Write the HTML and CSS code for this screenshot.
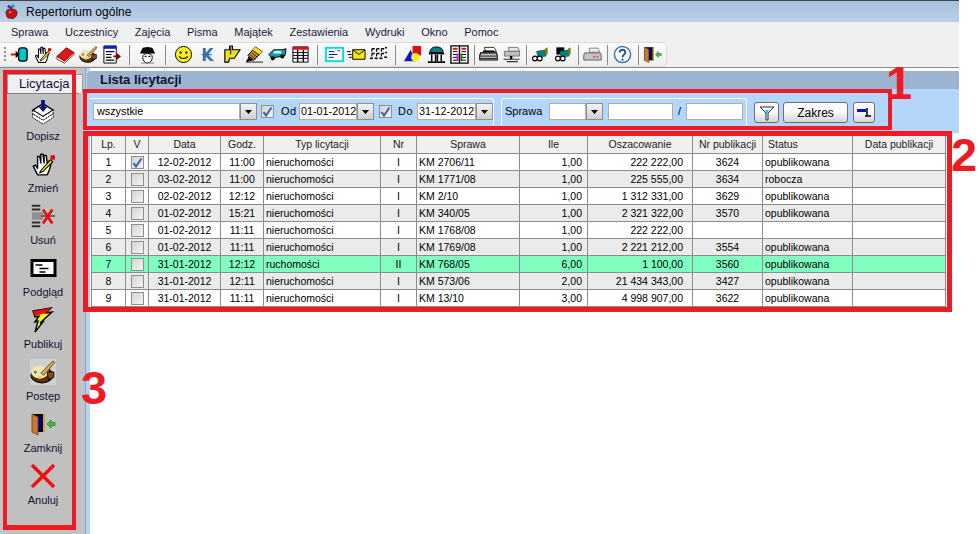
FILE: index.html
```html
<!DOCTYPE html>
<html lang="pl">
<head>
<meta charset="utf-8">
<title>Repertorium ogólne</title>
<link rel="stylesheet" href="styles.css">
</head>
<body>
<svg class="defs" width="0" height="0">
  <symbol id="hand" viewBox="0 0 24 24">
    <path d="M7 22 3 14l2-1 2 3V5l2 0 1 6V3h2l1 8V4h2l1 8 2-3 2 1-2 7-2 5z" fill="#fff" stroke="#000" stroke-width="1.300" stroke-linejoin="round"/>
    <path d="M10 18 19 8l2 2-9 9-3 1z" fill="#f0e020" stroke="#000"/>
    <rect x="19" y="4" width="4" height="4" fill="#e00000"/>
  </symbol>
  <symbol id="palette" viewBox="0 0 24 24">
    <ellipse cx="11" cy="15" rx="10" ry="7" fill="#5a3210" stroke="#000"/>
    <ellipse cx="9" cy="12" rx="8" ry="6" fill="#f0e4b0"/>
    <circle cx="5" cy="12" r="1.500" fill="#808080"/>
    <circle cx="9" cy="17" r="1.500" fill="#e8d040"/>
    <path d="M10 13 21 2l2 1L13 15z" fill="#d0a860" stroke="#604010" stroke-width=".8"/>
    <path d="M16 12h6v5l-5 2z" fill="#8a4a20" stroke="#000" stroke-width=".8"/>
  </symbol>
  <symbol id="door" viewBox="0 0 26 24">
    <path d="M2 2h13v18H2z" fill="#000"/>
    <path d="M5 4h8v14H5z" fill="#000080"/>
    <path d="M2 2 8 5v18l-6-3z" fill="#c87830" stroke="#704010" stroke-width=".8"/>
    <path d="M13 2h2v18h-2z" fill="#d0b000"/>
    <path d="M17 12l4-4v2.500h4v3h-4V16z" fill="#40c040" stroke="#207020" stroke-width=".7"/>
  </symbol>
  <symbol id="printer" viewBox="0 0 24 20">
    <path d="M7 1h12l3 5H8z" fill="#fff" stroke="#000"/>
    <path d="M2 8h20l1 3v6H1v-6z" fill="#c0c0c0" stroke="#000" stroke-width="1.400"/>
    <path d="M2 12h20M2 15h20" stroke="#000"/>
    <path d="M5 6h14" stroke="#000" stroke-width="2"/>
  </symbol>
  <symbol id="greyprinter" viewBox="0 0 24 20">
    <path d="M8 2h11l2 5H8z" fill="#f0f0f0" stroke="#707070"/>
    <path d="M2 8h20l1 3v6H1v-6z" fill="#c4c4c4" stroke="#606060" stroke-width="1.200"/>
    <path d="M13 13h2M17 13h2" stroke="#e02020" stroke-width="1.500"/>
  </symbol>
  <symbol id="cart" viewBox="0 0 24 20">
    <path d="M7 6 19 4v8l-10 2z" fill="#008080" stroke="#004040" stroke-width=".6"/>
    <path d="M18 2l3-1v9h-3z" fill="#808000"/>
    <circle cx="5" cy="15" r="3" fill="#fff" stroke="#000" stroke-width="1.400"/>
    <circle cx="11" cy="15" r="3" fill="#fff" stroke="#000" stroke-width="1.400"/>
  </symbol>
  <symbol id="tick" viewBox="0 0 11 11">
    <path d="M1.500 6 4 9.500 9.500 1.500" fill="none" stroke="#3c5fa8" stroke-width="2"/>
  </symbol>
  <symbol id="arrow" viewBox="0 0 9 5">
    <path d="M0 0h9L4.500 5z" fill="#000"/>
  </symbol>
</svg>

<div class="app">
  <header class="titlebar">
    <svg class="appicon" viewBox="0 0 16 16"><path d="M3 9c0-3 3-4 5-3 2-1 6 0 6 3 0 4-3 6-5 6-1 0-1-.5-2-.5S5 15 4.500 14 3 11 3 9z" fill="#c81010" stroke="#400000" stroke-width=".7"/><circle cx="6" cy="3" r="1.600" fill="#2040d0"/><circle cx="10" cy="2.500" r="1.600" fill="#20a040"/><circle cx="8" cy="4.500" r="1.400" fill="#800080"/><path d="M6 9.500 8 8" stroke="#fff"/></svg>
    <span class="apptitle">Repertorium ogólne</span>
  </header>

  <nav class="menubar">
    <span class="menuitem">Sprawa</span>
    <span class="menuitem">Uczestnicy</span>
    <span class="menuitem">Zajęcia</span>
    <span class="menuitem">Pisma</span>
    <span class="menuitem">Majątek</span>
    <span class="menuitem">Zestawienia</span>
    <span class="menuitem">Wydruki</span>
    <span class="menuitem">Okno</span>
    <span class="menuitem">Pomoc</span>
  </nav>

  <div class="toolstrip">
    <div class="toolbar">
      <span class="grip"></span>
      <span class="tool"><svg class="ti" viewBox="0 0 20 20"><rect x="9" y="3" width="9" height="14" rx="3" fill="#00c8c8" stroke="#000" stroke-width="1.400"/><path d="M1 10h8" stroke="#e00000" stroke-width="2"/><path d="M6 6l4 4-4 4z" fill="#000"/></svg></span>
      <span class="tool"><svg class="ti"><use href="#hand"/></svg></span>
      <span class="tool"><svg class="ti" viewBox="0 0 20 20"><path d="M1 12 11 3l8 5-10 9z" fill="#e01818" stroke="#800000"/><path d="M1 12v3l8 4 10-9V8L9 17z" fill="#fff" stroke="#600000" stroke-width=".8"/></svg></span>
      <span class="tool"><svg class="ti"><use href="#palette"/></svg></span>
      <span class="tool"><svg class="ti" viewBox="0 0 20 20"><path d="M2 1h13v18H2z" fill="#fff" stroke="#000"/><path d="M2 1h13v3H2z" fill="#1020d0"/><path d="M4 7h9M4 10h6M4 13h6M4 16h9" stroke="#000" stroke-width="1.300"/><path d="M12 11h3V8l5 4-5 4v-3h-3z" fill="#800000"/></svg></span>
      <span class="sep"></span>
      <span class="tool"><svg class="ti" viewBox="0 0 20 20"><path d="M5 13c0-3 2-4 5-4s5 1 5 4-2 6-5 6-5-3-5-6z" fill="#fff" stroke="#000"/><path d="M2 9 5 3l5-1 5 1 3 6z" fill="#000"/><path d="M7 12h2M11 12h2" stroke="#000" stroke-width="1.500"/><path d="M3 19h14" stroke="#808080"/></svg></span>
      <span class="sep"></span>
      <span class="tool"><svg class="ti" viewBox="0 0 20 20"><circle cx="10" cy="10" r="8.500" fill="#f8f020" stroke="#000"/><circle cx="7" cy="8" r="1.200"/><circle cx="13" cy="8" r="1.200"/><path d="M5.500 12c2 3 7 3 9 0" fill="none" stroke="#000" stroke-width="1.200"/></svg></span>
      <span class="tool tool-wide"><span class="kip">₭</span></span>
      <span class="tool"><svg class="ti" viewBox="0 0 20 20"><path d="M3 5h5V1h3v4h8l-6 9H8l-1 4H3z" fill="#f0e020" stroke="#000" stroke-width="1.200"/><path d="M9 2v8" stroke="#404040" stroke-width="1.500"/></svg></span>
      <span class="tool"><svg class="ti" viewBox="0 0 20 20"><path d="M3 11 11 2l7 5-9 9z" fill="#c89030" stroke="#000"/><path d="M11 2l7 5-3 3-7-5z" fill="#f0e020"/><path d="M5 10l6 5M7 8l6 5M9 6l6 5" stroke="#000" stroke-width=".8"/><path d="M1 18h18" stroke="#808080" stroke-width="2"/><path d="M1 18l3-6 5 4z" fill="#000"/></svg></span>
      <span class="tool"><svg class="ti" viewBox="0 0 20 20"><path d="M1 10 6 5h9l4-1-1 7-14 3z" fill="#10a0a0" stroke="#000"/><path d="M7 6h7v3H5z" fill="#c0ffff"/><circle cx="5" cy="14" r="2.200" fill="#000"/><circle cx="15" cy="12" r="2.200" fill="#000"/></svg></span>
      <span class="tool"><svg class="ti" viewBox="0 0 20 20"><path d="M2 2h16v16H2z" fill="#fff" stroke="#000"/><path d="M2 2h16v3H2z" fill="#e01010"/><path d="M7 5v13M13 5v13" stroke="#000" stroke-width="1.500"/><path d="M2 8h16M2 11h16M2 14h16" stroke="#000"/></svg></span>
      <span class="sep sep-mid"></span>
      <span class="tool tool-n"><svg class="ti" viewBox="0 0 20 20"><rect x="1" y="3" width="18" height="14" fill="#fff" stroke="#00e0e0" stroke-width="2"/><path d="M4 7h6M4 10h9M4 13h5" stroke="#0000c0"/><path d="M13 6h3" stroke="#e00000"/></svg></span>
      <span class="tool tool-n"><svg class="ti" viewBox="0 0 20 20"><path d="M6 5h13v10H6z" fill="#f8e800" stroke="#000"/><path d="M6 5l6.500 5L19 5" fill="none" stroke="#000"/><path d="M0 7h4M1 10h4M2 13h3" stroke="#000"/></svg></span>
      <span class="tool tool-n"><svg class="ti" viewBox="0 0 20 20"><path d="M3 4h3M8 4h3M13 4h3M17 3h2M3 9h3M8 9h3M13 9h3M17 8h2M1 14h3M6 14h3M11 14h3M16 13h3" stroke="#000" stroke-width="1.600"/><path d="M3 4v11M8 4v11M13 4v11" stroke="#000" stroke-width="1.200" stroke-dasharray="3 2"/></svg></span>
      <span class="sep"></span>
      <span class="tool"><svg class="ti" viewBox="0 0 20 20"><path d="M9 1h9v10H9z" fill="#e01010"/><path d="M0 17 7 5l5 12z" fill="#1010e0"/><circle cx="12" cy="13" r="4.500" fill="#f8f020"/></svg></span>
      <span class="tool"><svg class="ti" viewBox="0 0 20 20"><path d="M3 8c0-4 3-6 7-6s7 2 7 6z" fill="#008080" stroke="#000"/><path d="M2 8h16v2H2zM1 17h18v2H1z" fill="#000"/><path d="M4 10h12v7H4z" fill="#fff"/><path d="M5 10v7M9 10v7M11 10v7M15 10v7" stroke="#000" stroke-width="1.600"/></svg></span>
      <span class="tool"><svg class="ti" viewBox="0 0 20 20"><path d="M1 1h18v18H1z" fill="#fff" stroke="#000" stroke-width="1.400"/><path d="M10 1v18" stroke="#000" stroke-width="1.500"/><path d="M3 4h5M12 4h5" stroke="#e01010" stroke-width="2"/><path d="M3 7h5M12 7h5M3 10h5M12 10h5M3 13h5M12 13h5M3 16h5M12 16h5" stroke="#000"/><path d="M8 9v8" stroke="#e000e0" stroke-width="2"/><path d="M12 9v8" stroke="#008000" stroke-width="2"/></svg></span>
      <span class="sep sep-narrow"></span>
      <span class="tool"><svg class="ti"><use href="#printer"/></svg></span>
      <span class="tool"><svg class="ti" viewBox="0 0 24 20"><path d="M8 1h12l2 5H9z" fill="#e8e8e8" stroke="#606060"/><path d="M3 6h19v6H3z" fill="#c0c0c0" stroke="#606060"/><path d="M10 12h3v4h-3z" fill="#000"/><path d="M2 16h20M6 19h14" stroke="#303030" stroke-width="1.400"/></svg></span>
      <span class="sep sep-narrow"></span>
      <span class="tool"><svg class="ti"><use href="#cart"/></svg></span>
      <span class="tool"><svg class="ti" viewBox="0 0 24 20"><path d="M3 1h10v9H3z" fill="#000"/><use href="#cart" width="24" height="20"/></svg></span>
      <span class="sep sep-narrow"></span>
      <span class="tool"><svg class="ti"><use href="#greyprinter"/></svg></span>
      <span class="sep sep-narrow"></span>
      <span class="tool tool-pad"><svg class="ti" viewBox="0 0 20 20"><circle cx="10" cy="10" r="8.500" fill="#fff" stroke="#3a78b8" stroke-width="1.600"/><path d="M7 8c0-4 6-4 6 0 0 2-3 2-3 5" fill="none" stroke="#1c5aa0" stroke-width="2"/><circle cx="10" cy="15.500" r="1.200" fill="#1c5aa0"/></svg></span>
      <span class="sep sep-narrow"></span>
      <span class="tool"><svg class="ti"><use href="#door"/></svg></span>
    </div>
  </div>

  <div class="workspace">
    <aside class="sidebar">
      <div class="tab">Licytacja</div>
      <div class="tabpanel">
        <div class="sidebtn">
          <div class="sideicon"><svg class="si" viewBox="0 0 28 28"><path d="M3 12 14 5l11 7-11 7z" fill="#fff" stroke="#000" stroke-width="1.400"/><path d="M3 12v4l11 7 11-7v-4l-11 7z" fill="#fff" stroke="#000" stroke-dasharray="2 1"/><path d="M3 16v4l11 7 11-7v-4l-11 7z" fill="#fff" stroke="#000" stroke-dasharray="2 1"/><path d="M12 1h4v7h3l-5 6-5-6h3z" fill="#101080"/></svg></div>
          <span class="sidelabel">Dopisz</span>
        </div>
        <div class="sidebtn">
          <div class="sideicon"><svg class="si"><use href="#hand"/></svg></div>
          <span class="sidelabel">Zmień</span>
        </div>
        <div class="sidebtn">
          <div class="sideicon"><svg class="si" viewBox="0 0 28 28"><path d="M2 2h9v2H2zM2 6h9v2H2z" fill="#303030"/><path d="M2 10h12v8H2z" fill="#909090"/><path d="M2 20h9v2H2zM2 24h9v2H2z" fill="#303030"/><path d="M12 14h15" stroke="#606060" stroke-width="2"/><path d="M14 7l10 15M24 7 14 22" stroke="#e81010" stroke-width="3"/></svg></div>
          <span class="sidelabel">Usuń</span>
        </div>
        <div class="sidebtn">
          <div class="sideicon"><svg class="si si-card" viewBox="0 0 26 20"><path d="M1.500 2.500h23v15h-23z" fill="#fff" stroke="#000" stroke-width="3"/><path d="M5 7h7M9 10.500h9M9 14h6" stroke="#000" stroke-width="1.600"/></svg></div>
          <span class="sidelabel">Podgląd</span>
        </div>
        <div class="sidebtn">
          <div class="sideicon"><svg class="si" viewBox="0 0 24 26"><path d="M2 4 20 1l-5 5 6-1L9 16l3-1-8 10 3-11-3 1 4-6-4 1z" fill="#f8f020" stroke="#000" stroke-width="1.400"/><path d="M2 4 20 1l-5 5-8 2-3 1z" fill="#e81010"/></svg></div>
          <span class="sidelabel">Publikuj</span>
        </div>
        <div class="sidebtn">
          <div class="sideicon"><svg class="si si-tile"><use href="#palette"/></svg></div>
          <span class="sidelabel">Postęp</span>
        </div>
        <div class="sidebtn">
          <div class="sideicon"><svg class="si"><use href="#door"/></svg></div>
          <span class="sidelabel">Zamknij</span>
        </div>
        <div class="sidebtn">
          <div class="sideicon"><svg class="si" viewBox="0 0 26 24"><path d="M2 1 24 23M24 1 2 23" stroke="#f01010" stroke-width="3.500"/></svg></div>
          <span class="sidelabel">Anuluj</span>
        </div>
      </div>
    </aside>

    <main class="main">
      <h1 class="heading">Lista licytacji</h1>
      <section class="filter">
        <div class="group group-dates">
          <span class="field w-combo">wszystkie</span><span class="drop"><svg class="dropmark"><use href="#arrow"/></svg></span>
          <span class="check check-a"><svg class="tick"><use href="#tick"/></svg></span>
          <span class="lbl lbl-od">Od</span>
          <span class="field w-date">01-01-2012</span><span class="drop"><svg class="dropmark"><use href="#arrow"/></svg></span>
          <span class="check check-b"><svg class="tick"><use href="#tick"/></svg></span>
          <span class="lbl lbl-do">Do</span>
          <span class="field w-date2">31-12-2012</span><span class="drop"><svg class="dropmark"><use href="#arrow"/></svg></span>
        </div>
        <div class="group group-case">
          <span class="lbl lbl-sprawa">Sprawa</span>
          <span class="field w-rep"></span><span class="drop"><svg class="dropmark"><use href="#arrow"/></svg></span>
          <span class="field w-num"></span>
          <span class="lbl lbl-slash">/</span>
          <span class="field w-year"></span>
        </div>
        <button class="btn btn-filter"><svg class="funnel" viewBox="0 0 16 16"><path d="M1 2h14L9 8v7H7V8z" fill="#fff" stroke="#303030"/><path d="M6 5h4L8.500 8v6h-1V8z" fill="#20c0e0"/></svg></button>
        <button class="btn btn-range">Zakres</button>
        <button class="btn btn-export"><svg class="funnel" viewBox="0 0 16 16"><path d="M1 4h9v3H1z" fill="#1010d0"/><path d="M11 3v8M9 11h6" stroke="#000" stroke-width="1.500"/></svg></button>
      </section>

      <table class="grid">
        <colgroup>
          <col class="c-lp"><col class="c-v"><col class="c-data"><col class="c-godz"><col class="c-typ"><col class="c-nr"><col class="c-spr"><col class="c-ile"><col class="c-osz"><col class="c-pub"><col class="c-sta"><col class="c-dat">
        </colgroup>
        <thead>
          <tr><th>Lp.</th><th>V</th><th>Data</th><th>Godz.</th><th>Typ licytacji</th><th>Nr</th><th>Sprawa</th><th>Ile</th><th>Oszacowanie</th><th>Nr publikacji</th><th class="th-status">Status</th><th>Data publikacji</th></tr>
        </thead>
        <tbody>
          <tr><td class="ctr">1</td><td class="ctr"><span class="check"><svg class="tick"><use href="#tick"/></svg></span></td><td class="ctr">12-02-2012</td><td class="ctr">11:00</td><td>nieruchomości</td><td class="ctr">I</td><td>KM 2706/11</td><td class="num">1,00</td><td class="num amt">222 222,00</td><td class="ctr">3624</td><td>opublikowana</td><td></td></tr>
          <tr class="alt"><td class="ctr">2</td><td class="ctr"><span class="check"></span></td><td class="ctr">03-02-2012</td><td class="ctr">11:00</td><td>nieruchomości</td><td class="ctr">I</td><td>KM 1771/08</td><td class="num">1,00</td><td class="num amt">225 555,00</td><td class="ctr">3634</td><td>robocza</td><td></td></tr>
          <tr><td class="ctr">3</td><td class="ctr"><span class="check"></span></td><td class="ctr">02-02-2012</td><td class="ctr">12:12</td><td>nieruchomości</td><td class="ctr">I</td><td>KM 2/10</td><td class="num">1,00</td><td class="num amt">1 312 331,00</td><td class="ctr">3629</td><td>opublikowana</td><td></td></tr>
          <tr class="alt"><td class="ctr">4</td><td class="ctr"><span class="check"></span></td><td class="ctr">01-02-2012</td><td class="ctr">15:21</td><td>nieruchomości</td><td class="ctr">I</td><td>KM 340/05</td><td class="num">1,00</td><td class="num amt">2 321 322,00</td><td class="ctr">3570</td><td>opublikowana</td><td></td></tr>
          <tr><td class="ctr">5</td><td class="ctr"><span class="check"></span></td><td class="ctr">01-02-2012</td><td class="ctr">11:11</td><td>nieruchomości</td><td class="ctr">I</td><td>KM 1768/08</td><td class="num">1,00</td><td class="num amt">222 222,00</td><td class="ctr"></td><td></td><td></td></tr>
          <tr class="alt"><td class="ctr">6</td><td class="ctr"><span class="check"></span></td><td class="ctr">01-02-2012</td><td class="ctr">11:11</td><td>nieruchomości</td><td class="ctr">I</td><td>KM 1769/08</td><td class="num">1,00</td><td class="num amt">2 221 212,00</td><td class="ctr">3554</td><td>opublikowana</td><td></td></tr>
          <tr class="sel"><td class="ctr">7</td><td class="ctr"><span class="check"></span></td><td class="ctr">31-01-2012</td><td class="ctr">12:12</td><td>ruchomości</td><td class="ctr">II</td><td>KM 768/05</td><td class="num">6,00</td><td class="num amt">1 100,00</td><td class="ctr">3560</td><td>opublikowana</td><td></td></tr>
          <tr class="alt"><td class="ctr">8</td><td class="ctr"><span class="check"></span></td><td class="ctr">31-01-2012</td><td class="ctr">12:11</td><td>nieruchomości</td><td class="ctr">I</td><td>KM 573/06</td><td class="num">2,00</td><td class="num amt">21 434 343,00</td><td class="ctr">3427</td><td>opublikowana</td><td></td></tr>
          <tr><td class="ctr">9</td><td class="ctr"><span class="check"></span></td><td class="ctr">31-01-2012</td><td class="ctr">11:11</td><td>nieruchomości</td><td class="ctr">I</td><td>KM 13/10</td><td class="num">3,00</td><td class="num amt">4 998 907,00</td><td class="ctr">3622</td><td>opublikowana</td><td></td></tr>
        </tbody>
      </table>
    </main>
  </div>

  <div class="mark mark-1"></div>
  <div class="mark mark-2"></div>
  <div class="mark mark-3"></div>
  <span class="marknum marknum-1">1</span>
  <span class="marknum marknum-2">2</span>
  <span class="marknum marknum-3">3</span>
</div>
</body>
</html>
```

FILE: styles.css
```css
* { box-sizing: border-box; }
html, body { margin: 0; padding: 0; background: #fff; overflow: hidden; }
body { width: 979px; height: 534px; font-family: "Liberation Sans", Arial, sans-serif; font-size: 10.500px; color: #000; }
.defs { position: absolute; }

.app { position: relative; width: 959px; height: 534px; display: flex; flex-direction: column; }

/* title + menu */
.titlebar { height: 22px; flex: none; display: flex; align-items: center; padding-left: 3px; border-top: 1px solid #444; background: linear-gradient(#a6bfdc, #bcd1e8); }
.appicon { width: 16px; height: 17px; }
.apptitle { margin-left: 7px; font-size: 12px; color: #000; }

.menubar { height: 20px; flex: none; display: flex; align-items: center; background: #f0f0f0; font-size: 11px; padding-left: 11px; color: #1a1a40; }
.menuitem { margin-right: 16.700px; }

/* toolbar */
.toolstrip { height: 26px; flex: none; background: #f0f0f0; border-bottom: 1px solid #8a8a8a; }
.toolbar { width: 667px; height: 25px; display: flex; align-items: center; padding-left: 4px; background: linear-gradient(#fbfbfb, #eeeeee); border: 1px solid #dcdcdc; border-left: 0; border-radius: 0 5px 5px 0; }
.grip { width: 2px; height: 16px; margin-right: 2px; background: repeating-linear-gradient(#909090 0 2px, transparent 2px 4px); }
.tool { width: 23px; height: 22px; flex: none; display: flex; align-items: center; justify-content: center; }
.tool-wide { width: 25px; }
.tool-pad { width: 25px; }
.tool-n { width: 22px; }
.ti { width: 19px; height: 19px; }
.kip { font-family: "DejaVu Sans", sans-serif; font-size: 18px; font-weight: bold; color: #3a6ea8; line-height: 1; }
.sep { width: 1px; height: 20px; flex: none; margin: 0 6px; background: #8a8a8a; }
.sep-mid { margin: 0 5px; }
.sep-narrow { margin: 0 2.500px; }

/* body */
.workspace { flex: 1; display: flex; min-height: 0; background: #c0c0c0; }
.sidebar { width: 85px; flex: none; padding: 6px 0 0 7px; background: #c0c4c8; display: flex; flex-direction: column; }
.tab { width: 76px; height: 19px; flex: none; background: #f0f0f0; border: 1px solid #9a9a9a; border-bottom: 0; font-size: 13px; line-height: 18px; padding-left: 11px; color: #101040; }
.tabpanel { flex: 1; background: #c0c0c0; padding-top: 1px; border-top: 1px solid #808080; display: flex; flex-direction: column; width: 72px; }
.sidebtn { height: 52px; flex: none; display: flex; flex-direction: column; align-items: center; }
.sideicon { height: 34px; display: flex; align-items: center; justify-content: center; }
.si { width: 26px; height: 26px; }
.si-card { width: 27px; height: 20px; }
.si-tile { background: #d0d0d0; }
.sidelabel { font-size: 11px; line-height: 14px; color: #101030; }

.main { flex: 1; display: flex; flex-direction: column; background: #fff; border-left: 1px solid #8ca6c4; box-shadow: inset 4px 0 0 #b5d3f2; padding-left: 5px; min-width: 0; position: relative; }
.heading { margin: 3px 0 0 -4px; height: 18px; flex: none; font-size: 13px; line-height: 18px; font-weight: bold; padding-left: 13px; background: #9cb4d0; color: #101030; border-radius: 4px 0 0 0; }
.filter { height: 44px; flex: none; margin-left: -4px; padding: 9px 0 0 3px; display: flex; align-items: flex-start; background: #b4d6fb; }
.group { height: 27px; flex: none; display: flex; align-items: flex-start; padding-top: 4px; border-top: 1px solid #fff; border-right: 1px solid #fff; border-radius: 0 3px 0 0; }
.group-dates { width: 404px; padding-left: 3px; }
.group-case { width: 246px; margin-left: 7px; padding-left: 3px; border-left: 1px solid #fff; border-radius: 3px 3px 0 0; }
.field { height: 17px; flex: none; background: #fff; border: 1px solid #abadb3; line-height: 14px; padding-left: 1px; font-size: 10.800px; white-space: nowrap; overflow: hidden; }
.w-combo { width: 147px; padding-left: 3px; }
.w-date { width: 58px; margin-left: 3px; }
.w-date2 { width: 59px; margin-left: 5px; }
.w-rep { width: 37px; margin-left: 8px; }
.w-num { width: 65px; margin-left: 5px; }
.w-year { width: 57px; margin-left: 5px; }
.drop { width: 17px; height: 17px; flex: none; display: flex; align-items: center; justify-content: center; background: linear-gradient(#f4f4f4, #cfcfcf); border: 1px solid #8f8f8f; }
.dropmark { width: 7px; height: 4px; }
.check { width: 13px; height: 13px; flex: none; display: inline-flex; align-items: center; justify-content: center; border: 1px solid #8e8f8f; background: linear-gradient(135deg, #d4d4d4, #f4f4f4); vertical-align: middle; }
.tick { width: 11px; height: 11px; }
.check-a { margin: 2px 0 0 4px; }
.check-b { margin: 2px 0 0 5px; }
.lbl { flex: none; font-size: 11px; letter-spacing: .5px; line-height: 16px; white-space: nowrap; }
.lbl-od { width: 15px; margin-left: 7px; }
.lbl-do { width: 14px; margin-left: 6px; }
.lbl-sprawa { width: 36px; letter-spacing: 0; }
.lbl-slash { width: 3px; margin-left: 5px; }
.btn { flex: none; height: 21px; margin: 4px 0 0; padding: 0; display: inline-flex; align-items: center; justify-content: center; font: 12px "Liberation Sans", Arial, sans-serif; color: #000; background: linear-gradient(#fafafa 45%, #d4d4d4); border: 1px solid #707070; border-radius: 3px; }
.btn-filter { width: 25px; margin-left: 7px; }
.btn-range { width: 65px; margin-left: 4px; }
.btn-export { width: 22px; margin-left: 5px; }
.funnel { width: 16px; height: 16px; }

/* table */
.grid { width: 855px; margin: 2px 0 0 0; border-collapse: collapse; table-layout: fixed; font-size: 10.500px; }
.grid th, .grid td { padding: 0 2px; overflow: hidden; white-space: nowrap; border: 1px solid #8c8c8c; font-weight: normal; }
.grid th { height: 18px; background: #f0f0f0; text-align: center; border-top: 0; line-height: 14px; color: #202020; }
.grid td { height: 17px; line-height: 14px; background: #fff; }
.grid .alt td { background: #ebebeb; }
.grid .sel td { background: #80ffc0; }
.grid .th-status { text-align: left; padding-left: 5px; }
.ctr { text-align: center; }
.num { text-align: right; }
.grid td.num { padding-right: 5px; }
.grid td.amt { padding-right: 9px; }
.c-lp { width: 34px; } .c-v { width: 23px; } .c-data { width: 72px; } .c-godz { width: 43px; }
.c-typ { width: 117px; } .c-nr { width: 36px; } .c-spr { width: 103px; } .c-ile { width: 68px; }
.c-osz { width: 105px; } .c-pub { width: 70px; } .c-sta { width: 90px; } .c-dat { width: 93px; }

/* annotations laid over the screenshot */
.mark { position: absolute; border: 4px solid #ed1c24; pointer-events: none; }
.mark-1 { left: 83px; top: 89px; width: 809px; height: 41px; }
.mark-2 { left: 83px; top: 131px; width: 869px; height: 181px; border-width: 5px; }
.mark-3 { left: 3px; top: 70px; width: 73px; height: 460px; border-bottom-width: 5px; }
.marknum { position: absolute; font: bold 47px/47px "Liberation Sans", Arial, sans-serif; color: #ed1c24; }
.marknum-1 { left: 886px; top: 59px; }
.marknum-2 { left: 951px; top: 131px; }
.marknum-3 { left: 81px; top: 364px; }
```
